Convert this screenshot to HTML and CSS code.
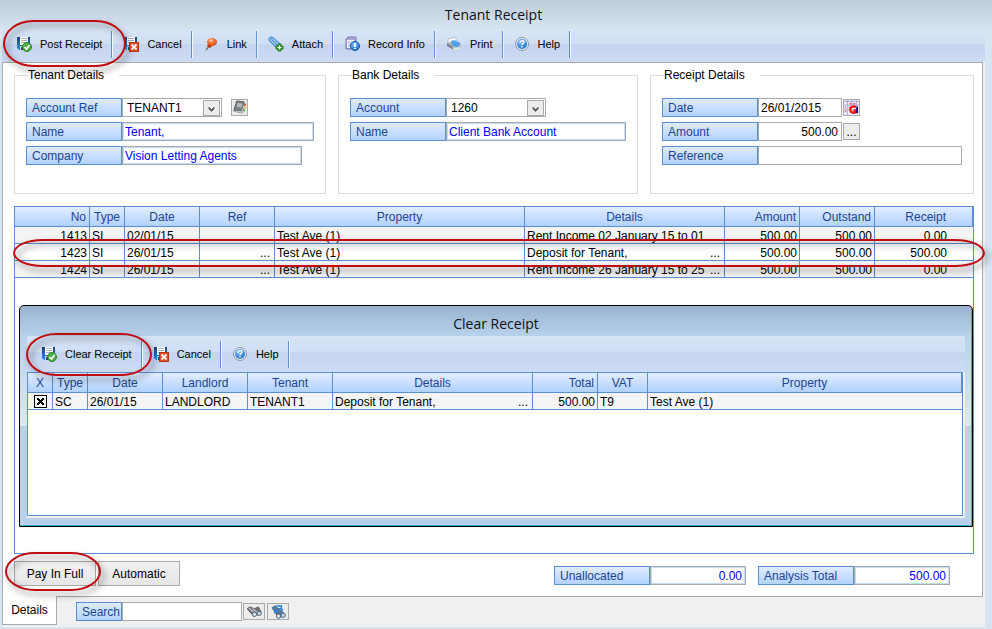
FILE: index.html
```html
<!DOCTYPE html>
<html lang="en">
<head>
    <meta charset="UTF-8">
    <meta name="viewport" content="width=device-width, initial-scale=1.0">
    <title>Tenant Receipt</title>
    <link rel="stylesheet" href="styles.css">
</head>
<body>
    <!-- Shared icons -->
    <svg class="sprite" aria-hidden="true">
        <defs>
            <linearGradient id="blueDisk" x1="0" y1="0" x2="0" y2="1">
                <stop offset="0" stop-color="#17427c"/>
                <stop offset="1" stop-color="#2f8fe0"/>
            </linearGradient>
            <radialGradient id="ballBlue" cx="0.4" cy="0.3" r="0.8">
                <stop offset="0" stop-color="#7fc0ff"/>
                <stop offset="1" stop-color="#1668c8"/>
            </radialGradient>
            <radialGradient id="ballOrange" cx="0.4" cy="0.3" r="0.8">
                <stop offset="0" stop-color="#ff9a5c"/>
                <stop offset="1" stop-color="#d23c08"/>
            </radialGradient>
        </defs>
        <symbol id="disk" viewBox="0 0 16 16">
            <path d="M1 1h13v13H3l-2-2z" fill="url(#blueDisk)"/>
            <path d="M4 1h8v8H4z" fill="#fff"/>
            <path d="M5 2.500h6M5 4.500h6M5 6.500h6" stroke="#a9b5c6"/>
            <path d="M4 10h7v4H4z" fill="#cfd8e2"/>
            <path d="M5 11h2v3H5z" fill="#24466e"/>
        </symbol>
        <symbol id="save-ok" viewBox="0 0 16 16">
            <use href="#disk"/>
            <circle cx="11" cy="11" r="4.5" fill="#4cb046" stroke="#2b8428"/>
            <path d="M8.500 11l2 2 3-4" fill="none" stroke="#fff" stroke-width="1.600"/>
        </symbol>
        <symbol id="save-cancel" viewBox="0 0 16 16">
            <use href="#disk"/>
            <rect x="6.500" y="6.500" width="9" height="9" fill="#e4502c" stroke="#b9330f"/>
            <path d="M8.500 8.500l5 5M13.500 8.500l-5 5" stroke="#fff" stroke-width="1.800"/>
        </symbol>
        <symbol id="pin" viewBox="0 0 16 16">
            <path d="M7 9l-4 5" stroke="#777" stroke-width="1.500"/>
            <path d="M5 8l4 2-2 2-3-2z" fill="#b4320a"/>
            <ellipse cx="9" cy="6" rx="5" ry="4" fill="url(#ballOrange)"/>
            <ellipse cx="8" cy="4.500" rx="2" ry="1" fill="#ffc9a4"/>
        </symbol>
        <symbol id="clip" viewBox="0 0 16 16">
            <path d="M1 4c0-3 3-3 4-2l8 7M1 4l8 8M3 3l8 8" fill="none" stroke="#4c93d6" stroke-width="1.600"/>
            <path d="M2 3.500l8 8M5 3l7 7" stroke="#a9cdf0"/>
            <path d="M10 8h3v2h2v3h-2v2h-3v-2H8v-3h2z" fill="#3fae3a" stroke="#1e7a1b"/>
            <path d="M11.500 9.500v4M9.500 11.500h4" stroke="#fff" stroke-width="1.200"/>
        </symbol>
        <symbol id="record" viewBox="0 0 16 16">
            <path d="M2 3l2-2h8v11l-2 1H2z" fill="#a9a6cf" stroke="#7d7bb0"/>
            <path d="M3 4h7v8H3z" fill="#f2f2fb"/>
            <path d="M4 6h5M4 8h4M4 10h3" stroke="#a9a6cf"/>
            <circle cx="11" cy="10" r="4.500" fill="url(#ballBlue)" stroke="#135bb0"/>
            <path d="M11 7v4M11 12v1" stroke="#fff" stroke-width="1.800"/>
        </symbol>
        <symbol id="printer" viewBox="0 0 16 16">
            <path d="M2 3l7-2 2 4-5 3-4-1z" fill="#f7f9fb" stroke="#a4acb4" stroke-width="0.700"/>
            <path d="M1 7l4-1h9l1 3-1 4-6 1-7-4z" fill="#b4b9bf"/>
            <path d="M1 7l5 3 2 4-7-4z" fill="#7e868e"/>
            <path d="M5 5c3-2 7-1 9 3l-3 4-5-3z" fill="#4f9fe6"/>
            <path d="M7 5c2-1 4 0 5 1" fill="none" stroke="#a9d4fa"/>
            <path d="M7 12l6-1 1 2-6 1z" fill="#e4e7ea"/>
        </symbol>
        <symbol id="help" viewBox="0 0 16 16">
            <circle cx="8" cy="8" r="6.500" fill="#e8edf3" stroke="#8d949c"/>
            <circle cx="8" cy="8" r="5" fill="url(#ballBlue)"/>
            <path d="M6 7c0-3 4-3 4-1 0 1.500-2 1.200-2 3M8 10v1.500" fill="none" stroke="#fff" stroke-width="1.400"/>
        </symbol>
        <symbol id="book" viewBox="0 0 16 16">
            <path d="M5 1l8 1-2 10-9-1z" fill="#7d8185" stroke="#55595d"/>
            <path d="M6 3l5 1-1 4-5-1z" fill="#b4b9bd"/>
            <path d="M2 11l8 1 3-9 1 1-3 10-9-2z" fill="#eee" stroke="#666" stroke-width="0.600"/>
            <path d="M14 4v2" stroke="#e04a2f" stroke-width="2"/>
            <path d="M14 7v2" stroke="#f0b429" stroke-width="2"/>
            <path d="M13 10v2" stroke="#45a845" stroke-width="2"/>
        </symbol>
        <symbol id="calendar" viewBox="0 0 16 16">
            <path d="M0 0h16v16H0z" fill="#eeeefa"/>
            <path d="M0 1.500h16M0 5.500h16M0 10.500h6M3.500 0v16M8.500 0v6M13.500 0v6" stroke="#a6a6d6"/>
            <path d="M6 4h2M10 4h2M1 8h1M1 12h1M5 8h1" stroke="#f04040" stroke-width="1.500"/>
            <path d="M13 7.500c-3-1.500-7 0-6 3.500 0 3 4 3 6 2v-2h-3" fill="none" stroke="#f01010" stroke-width="2.500"/>
            <path d="M13 7h2v7h-2z" fill="#10107c"/>
        </symbol>
        <symbol id="binoculars" viewBox="0 0 16 16">
            <path d="M0 5l3-2 5 2 4-2 3 5-1 3-4 1-3 1z" fill="#6f7377" stroke="#4b4e52" stroke-width="0.700"/>
            <path d="M2 4l5 5M6 5l5 4" stroke="#c6cacd" stroke-width="1.200"/>
            <circle cx="8" cy="11" r="2.300" fill="#d7eaf9" stroke="#55606a"/>
            <circle cx="13" cy="10" r="2.300" fill="#b7dbf6" stroke="#55606a"/>
        </symbol>
        <symbol id="find-next" viewBox="0 0 16 16">
            <path d="M1 4l3-2 7 5 3 3-2 4-5-1z" fill="#6f7377" stroke="#4b4e52" stroke-width="0.700"/>
            <circle cx="8" cy="13" r="2.300" fill="#d7eaf9" stroke="#55606a"/>
            <circle cx="13" cy="12" r="2.300" fill="#b7dbf6" stroke="#55606a"/>
            <path d="M3 6c0-4 5-5 7-3M11 1v4H7M12 5c0 4-4 5-7 3M4 10V7h3" fill="none" stroke="#2f86d8" stroke-width="1.600"/>
        </symbol>
        <symbol id="chevron" viewBox="0 0 16 16">
            <path d="M5 7l3 3 3-3v2l-3 3-3-3z" fill="#555" stroke="#555" stroke-width="0.800"/>
        </symbol>
    </svg>

    <div class="window">
        <h1 class="title">Tenant Receipt</h1>

        <div class="toolbar">
            <button type="button" class="tool"><svg><use href="#save-ok"/></svg>Post Receipt<span class="ring ring-tool"></span></button>
            <button type="button" class="tool"><svg><use href="#save-cancel"/></svg>Cancel</button>
            <button type="button" class="tool"><svg><use href="#pin"/></svg>Link</button>
            <button type="button" class="tool"><svg><use href="#clip"/></svg>Attach</button>
            <button type="button" class="tool"><svg><use href="#record"/></svg>Record Info</button>
            <button type="button" class="tool"><svg><use href="#printer"/></svg>Print</button>
            <button type="button" class="tool"><svg><use href="#help"/></svg>Help</button>
        </div>

        <div class="client">
            <main class="panel">
                <div class="groups">
                    <fieldset>
                        <legend>Tenant Details</legend>
                        <div class="field">
                            <label for="accountRef">Account Ref</label>
                            <div class="combo">
                                <select id="accountRef"><option>TENANT1</option></select>
                                <svg><use href="#chevron"/></svg>
                            </div>
                            <button type="button" class="icon-btn address-btn" aria-label="Address book"><svg><use href="#book"/></svg></button>
                        </div>
                        <div class="field">
                            <label for="tenantName">Name</label>
                            <input type="text" id="tenantName" class="readonly w-long" value="Tenant," readonly>
                        </div>
                        <div class="field">
                            <label for="company">Company</label>
                            <input type="text" id="company" class="readonly w-medium" value="Vision Letting Agents" readonly>
                        </div>
                    </fieldset>

                    <fieldset>
                        <legend>Bank Details</legend>
                        <div class="field">
                            <label for="bankAccount">Account</label>
                            <div class="combo">
                                <select id="bankAccount"><option>1260</option></select>
                                <svg><use href="#chevron"/></svg>
                            </div>
                        </div>
                        <div class="field">
                            <label for="bankName">Name</label>
                            <input type="text" id="bankName" class="readonly w-medium" value="Client Bank Account" readonly>
                        </div>
                    </fieldset>

                    <fieldset>
                        <legend>Receipt Details</legend>
                        <div class="field">
                            <label for="receiptDate">Date</label>
                            <input type="text" id="receiptDate" class="w-short" value="26/01/2015">
                            <button type="button" class="icon-btn" aria-label="Calendar"><svg><use href="#calendar"/></svg></button>
                        </div>
                        <div class="field">
                            <label for="amount">Amount</label>
                            <input type="text" id="amount" class="w-short num" value="500.00">
                            <button type="button" class="icon-btn">...</button>
                        </div>
                        <div class="field">
                            <label for="reference">Reference</label>
                            <input type="text" id="reference" class="w-full">
                        </div>
                    </fieldset>
                </div>

                <div class="grid-box main-grid">
                    <table>
                        <colgroup>
                            <col class="c75"><col class="c35"><col class="c75"><col class="c75"><col class="c250"><col class="c200"><col class="c75"><col class="c75"><col>
                        </colgroup>
                        <thead>
                            <tr>
                                <th class="num">No</th>
                                <th>Type</th>
                                <th>Date</th>
                                <th>Ref</th>
                                <th>Property</th>
                                <th>Details</th>
                                <th class="num">Amount</th>
                                <th class="num">Outstand</th>
                                <th class="num last">Receipt</th>
                            </tr>
                        </thead>
                        <tbody>
                            <tr>
                                <td class="num">1413</td>
                                <td>SI</td>
                                <td>02/01/15</td>
                                <td></td>
                                <td>Test Ave (1)</td>
                                <td>Rent Income 02 January 15 to 01</td>
                                <td class="num">500.00</td>
                                <td class="num">500.00</td>
                                <td class="num last">0.00</td>
                            </tr>
                            <tr class="selected">
                                <td class="num">1423</td>
                                <td>SI</td>
                                <td>26/01/15</td>
                                <td><span class="more">...</span></td>
                                <td>Test Ave (1)</td>
                                <td>Deposit for Tenant,<span class="more">...</span></td>
                                <td class="num">500.00</td>
                                <td class="num">500.00</td>
                                <td class="num last">500.00</td>
                            </tr>
                            <tr>
                                <td class="num">1424</td>
                                <td>SI</td>
                                <td>26/01/15</td>
                                <td><span class="more">...</span></td>
                                <td>Test Ave (1)</td>
                                <td>Rent Income 26 January 15 to 25<span class="more">...</span></td>
                                <td class="num">500.00</td>
                                <td class="num">500.00</td>
                                <td class="num last">0.00</td>
                            </tr>
                        </tbody>
                    </table>
                    <span class="ring ring-row"></span>

                    <!-- Clear Receipt window -->
                    <section class="dialog">
                        <h2 class="dialog-title">Clear Receipt</h2>
                        <div class="dialog-frame">
                            <div class="toolbar dialog-toolbar">
                                <button type="button" class="tool"><svg><use href="#save-ok"/></svg>Clear Receipt<span class="ring ring-tool"></span></button>
                                <button type="button" class="tool"><svg><use href="#save-cancel"/></svg>Cancel</button>
                                <button type="button" class="tool"><svg><use href="#help"/></svg>Help</button>
                            </div>
                            <div class="dialog-client">
                                <div class="grid-box">
                                    <table>
                                        <colgroup>
                                            <col class="c25"><col class="c35"><col class="c75"><col class="c85"><col class="c85"><col class="c200"><col class="c65"><col class="c50"><col>
                                        </colgroup>
                                        <thead>
                                            <tr>
                                                <th>X</th>
                                                <th>Type</th>
                                                <th>Date</th>
                                                <th>Landlord</th>
                                                <th>Tenant</th>
                                                <th>Details</th>
                                                <th class="num">Total</th>
                                                <th>VAT</th>
                                                <th>Property</th>
                                            </tr>
                                        </thead>
                                        <tbody>
                                            <tr>
                                                <td class="check"><input type="checkbox" aria-label="Clear" checked></td>
                                                <td>SC</td>
                                                <td>26/01/15</td>
                                                <td>LANDLORD</td>
                                                <td>TENANT1</td>
                                                <td>Deposit for Tenant,<span class="more">...</span></td>
                                                <td class="num">500.00</td>
                                                <td>T9</td>
                                                <td>Test Ave (1)</td>
                                            </tr>
                                        </tbody>
                                    </table>
                                </div>
                            </div>
                        </div>
                    </section>
                </div>

                <div class="actions">
                    <button type="button" class="btn">Pay In Full<span class="ring ring-btn"></span></button>
                    <button type="button" class="btn">Automatic</button>
                    <div class="totals">
                        <div class="field">
                            <label for="unallocated">Unallocated</label>
                            <input type="text" id="unallocated" class="readonly num w-total" value="0.00" readonly>
                        </div>
                        <div class="field">
                            <label for="analysisTotal">Analysis Total</label>
                            <input type="text" id="analysisTotal" class="readonly num w-total" value="500.00" readonly>
                        </div>
                    </div>
                </div>
            </main>

            <div class="footer">
                <button type="button" class="tab">Details</button>
                <div class="field search">
                    <label for="search">Search</label>
                    <input type="text" id="search" class="w-search">
                    <button type="button" class="icon-btn wide" aria-label="Find"><svg><use href="#binoculars"/></svg></button>
                    <button type="button" class="icon-btn wide" aria-label="Find next"><svg><use href="#find-next"/></svg></button>
                </div>
            </div>
        </div>
    </div>
</body>
</html>
```
FILE: styles.css
```css
* {
    margin: 0;
    padding: 0;
    box-sizing: border-box;
}

body {
    font-family: "Liberation Sans", Arial, sans-serif;
    font-size: 12px;
    line-height: 14px;
    color: #000;
    background: #d7e4f2;
}

button,
input,
select {
    font: inherit;
    color: inherit;
    border-radius: 0;
}

.sprite {
    position: absolute;
    width: 0;
    height: 0;
}

.window {
    display: flex;
    flex-direction: column;
    min-height: 100vh;
    padding: 0 7px 2px 2px;
    background: linear-gradient(#bfcddb, #d7e5f3 30px, #d7e4f2 31px);
}

.title,
.dialog-title {
    font-family: "Open Sans", "Noto Sans", sans-serif;
    font-size: 14px;
    font-weight: 400;
    line-height: 30px;
    text-align: center;
    color: #111;
}

/* Toolbar */
.toolbar {
    display: flex;
    align-items: center;
    height: 32px;
    padding-left: 4px;
    padding-bottom: 4px;
    background: linear-gradient(#d7e4f6, #cfdef4 45%, #c5d5ef 45%, #cddbf4);
}

.tool {
    position: relative;
    display: flex;
    align-items: center;
    gap: 8px;
    height: 27px;
    padding: 0 9px 0 10px;
    border: none;
    border-right: 1px solid #5b8fd3;
    box-shadow: 1px 0 #f4f8ff;
    margin-right: 1px;
    background: none;
    font-size: 11px;
}

.tool svg {
    width: 16px;
    height: 16px;
}

/* Main panel */
.client {
    flex: 1;
    display: flex;
    flex-direction: column;
    padding-right: 2px;
    background: #f0f0f0;
}

.panel {
    flex: 1;
    display: flex;
    flex-direction: column;
    padding: 5px 8px 10px 11px;
    border: 1px solid #aaa;
    background: #fff;
}

.groups {
    display: grid;
    grid-template-columns: 312fr 300fr 324fr;
    gap: 12px;
    margin-bottom: 12px;
}

fieldset {
    min-width: 0;
    padding: 16px 11px 28px;
    border: 1px solid #dcdcdc;
}

legend {
    margin-left: 2px;
    padding-right: 15px;
    line-height: 14px;
}

.field {
    display: flex;
    align-items: center;
}

.field + .field {
    margin-top: 5px;
}

.field label {
    flex: none;
    width: 96px;
    height: 19px;
    padding: 1px 0 0 5px;
    border: 1px solid #5b8fd3;
    background: linear-gradient(#dfecff, #b3d3ff);
    color: #1d4590;
    line-height: 17px;
}

input[type="text"],
select {
    height: 19px;
    padding: 0 3px 0 2px;
    border: 1px solid #aaa;
    background: #fff;
    outline: none;
}

input.readonly {
    border-color: #a6a9b0;
    box-shadow: inset 0 0 0 1px #c5dcf5;
    color: #00f;
}

input.num {
    text-align: right;
}

.w-short {
    width: 84px;
}

.w-medium {
    width: 180px;
}

.w-long {
    width: 192px;
}

.w-full {
    flex: 1;
    min-width: 0;
}

.w-total {
    width: 96px;
}

.w-search {
    width: 120px;
}

.combo {
    position: relative;
    width: 100px;
}

.combo select {
    display: block;
    width: 100%;
    padding-left: 4px;
    appearance: none;
}

.combo svg {
    position: absolute;
    top: 2px;
    right: 2px;
    width: 17px;
    height: 16px;
    border: 1px solid #aaa;
    background: #ececec;
    pointer-events: none;
}

.icon-btn {
    display: flex;
    align-items: center;
    justify-content: center;
    width: 17px;
    height: 17px;
    margin-left: 1px;
    border: 1px solid #aaa;
    background: #ececec;
}

.icon-btn svg {
    flex: none;
    width: 15px;
    height: 15px;
}

.icon-btn.wide {
    width: 22px;
}

.icon-btn.wide + .icon-btn.wide {
    margin-left: 2px;
}

.icon-btn.address-btn {
    margin-left: 9px;
}

/* Data grids */
.grid-box {
    border: 1px solid #5b8fd3;
    background: #fff;
}

.main-grid {
    position: relative;
    flex: 1;
    display: flex;
    flex-direction: column;
}

table {
    width: 100%;
    table-layout: fixed;
    border-collapse: separate;
    border-spacing: 0;
}

th,
td {
    padding: 0 2px;
    border-right: 1px solid #5b8fd3;
    border-bottom: 1px solid #5b8fd3;
    white-space: nowrap;
    overflow: hidden;
}

th {
    height: 20px;
    background: linear-gradient(#e2eeff, #b0d1ff);
    color: #1d4590;
    font-weight: 400;
}

td {
    height: 17px;
    padding-top: 2px;
    background: #f4f4f4;
    text-align: left;
}

td:last-child {
    border-right: none;
}

.selected td {
    background: #fff;
}

.num {
    text-align: right;
}

th.num {
    padding-right: 3px;
}

td.last,
th.last {
    padding-right: 26px;
}

.more {
    float: right;
    margin-right: 2px;
}

.c25 { width: 25px; }
.c35 { width: 35px; }
.c50 { width: 50px; }
.c65 { width: 65px; }
.c75 { width: 75px; }
.c85 { width: 85px; }
.c200 { width: 200px; }
.c250 { width: 250px; }

td.check {
    padding-top: 1px;
}

.check input {
    display: block;
    width: 13px;
    height: 13px;
    margin: 0 auto;
    border: 1px solid #000;
    appearance: none;
    background: #fff;
}

.check input:checked {
    background:
        linear-gradient(45deg, transparent 38%, #000 38%, #000 62%, transparent 62%) center / 7px 7px no-repeat,
        linear-gradient(-45deg, transparent 38%, #000 38%, #000 62%, transparent 62%) center / 7px 7px no-repeat,
        #fff;
}

/* Clear Receipt window */
.dialog {
    flex: 1;
    display: flex;
    flex-direction: column;
    margin: 27px 0 26px 4px;
    border: 1px solid #000;
    border-radius: 5px 5px 0 0;
    box-shadow: inset -1px -1px #2fb4d0;
    background: linear-gradient(#99b2cf, #b9d2eb 30px, #dbe8f6 120px, #b9d2eb 120px);
}

.dialog-title {
    padding-top: 6px;
    line-height: 24px;
}

.dialog-frame {
    flex: 1;
    display: flex;
    flex-direction: column;
    padding: 0 7px;
    margin-bottom: 8px;
}

.dialog-toolbar {
    height: 36px;
    padding-bottom: 0;
}

.dialog-client {
    flex: 1;
    display: flex;
    padding: 0 2px 2px 0;
    background: #f0f0f0;
}

.dialog-client .grid-box {
    flex: 1;
    min-height: 144px;
}

/* Bottom actions */
.actions {
    display: flex;
    gap: 2px;
    margin-top: 7px;
}

.btn {
    position: relative;
    width: 82px;
    height: 25px;
    border: 1px solid #aaa;
    background: linear-gradient(#f2f2f2, #e6e6e6);
}

.totals {
    display: flex;
    align-items: center;
    gap: 12px;
    margin-left: auto;
    padding: 4px 24px 0 0;
}

.totals .field + .field {
    margin-top: 0;
}

.footer {
    display: flex;
    align-items: flex-start;
    height: 30px;
}

.tab {
    width: 55px;
    height: 29px;
    margin-top: -1px;
    border: 1px solid #aaa;
    border-top: none;
    background: #fff;
}

.search {
    margin: 5px 0 0 19px;
}

.search label {
    width: 46px;
}

/* Red marker outlines */
.ring {
    position: absolute;
    z-index: 2;
    border: 2px solid #c00d12;
    border-radius: 30px / 50%;
    filter: drop-shadow(3px 4px 3px rgba(0, 0, 0, 0.5));
    pointer-events: none;
}

.ring-tool {
    inset: -11px -15px -9px -3px;
}

.dialog .ring-tool {
    inset: -8px -11px -8px -5px;
}

.ring-row {
    top: 32px;
    left: -2px;
    right: -12px;
    height: 28px;
}

.ring-btn {
    inset: -10px -6px -6px -10px;
}
```
